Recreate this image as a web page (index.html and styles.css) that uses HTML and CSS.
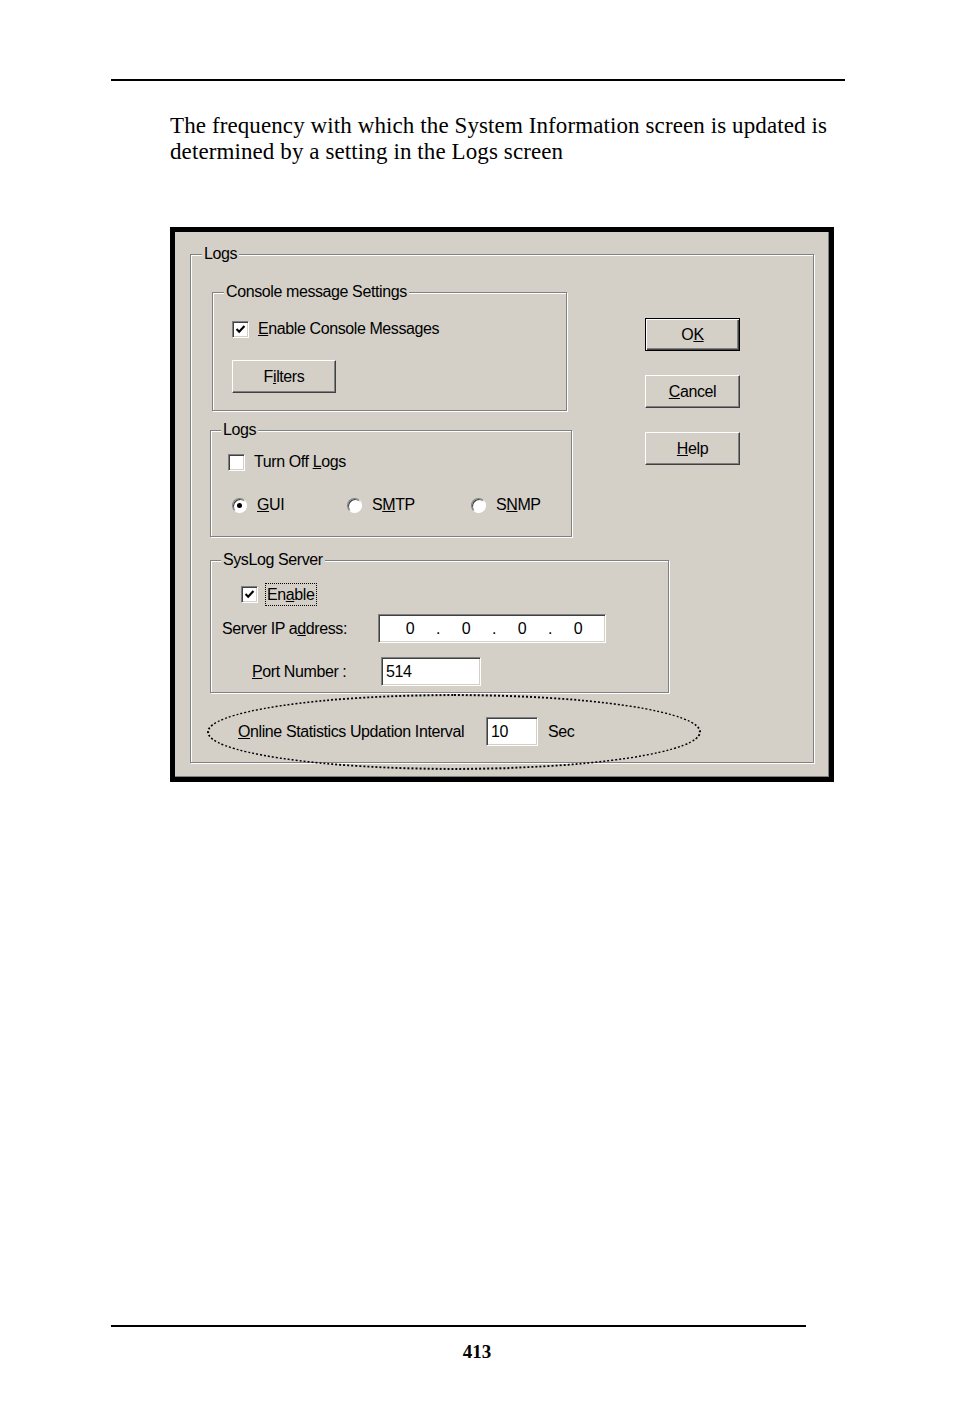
FILE: index.html
```html
<!DOCTYPE html>
<html lang="en">

<head>
    <meta charset="UTF-8">
    <meta name="viewport" content="width=device-width, initial-scale=1.0">
    <title>Logs</title>
    <link rel="stylesheet" href="styles.css">
</head>

<body>
    <div class="page">
        <hr class="rule rule-top">
        <p class="intro">The frequency with which the System Information screen is updated is<br>determined by a setting in the Logs screen</p>

        <div class="dialog">
            <div class="group group-main">
                <div class="group-title">Logs</div>
                <div class="main-top">
                    <div class="left-col">
                        <div class="group group-console">
                            <div class="group-title">Console message Settings</div>
                            <div class="check-row row-console">
                                <span class="check checked"><svg viewBox="0 0 17 17"><path d="M4 8 L7 11 L13 4.5" /></svg></span>
                                <span class="label"><u>E</u>nable Console Messages</span>
                            </div>
                            <button class="btn btn-filters">F<u>i</u>lters</button>
                        </div>

                        <div class="group group-logs">
                            <div class="group-title">Logs</div>
                            <div class="check-row row-turnoff">
                                <span class="check"></span>
                                <span class="label">Turn Off <u>L</u>ogs</span>
                            </div>
                            <div class="radio-row">
                                <div class="radio-item"><span class="radio selected"></span><span><u>G</u>UI</span></div>
                                <div class="radio-item"><span class="radio"></span><span>S<u>M</u>TP</span></div>
                                <div class="radio-item"><span class="radio"></span><span>S<u>N</u>MP</span></div>
                            </div>
                        </div>
                    </div>

                    <div class="buttons">
                        <button class="btn btn-default">O<u>K</u></button>
                        <button class="btn"><u>C</u>ancel</button>
                        <button class="btn"><u>H</u>elp</button>
                    </div>
                </div>

                <div class="group group-syslog">
                    <div class="group-title">SysLog Server</div>
                    <div class="check-row row-enable">
                        <span class="check checked"><svg viewBox="0 0 17 17"><path d="M4 8 L7 11 L13 4.5" /></svg></span>
                        <span class="label focus">En<u>a</u>ble</span>
                    </div>
                    <div class="field-row row-ip">
                        <span class="field-label">Server IP a<u>d</u>dress:</span>
                        <div class="field field-ip">
                            <span class="octet">0</span><span class="dot">.</span>
                            <span class="octet">0</span><span class="dot">.</span>
                            <span class="octet">0</span><span class="dot">.</span>
                            <span class="octet">0</span>
                        </div>
                    </div>
                    <div class="field-row row-port">
                        <span class="field-label"><u>P</u>ort Number :</span>
                        <div class="field field-port">514</div>
                    </div>
                </div>

                <div class="field-row row-online">
                    <span class="field-label"><u>O</u>nline Statistics Updation Interval</span>
                    <div class="field field-interval">10</div>
                    <span class="unit">Sec</span>
                </div>
            </div>

            <div class="highlight"></div>
        </div>

        <div class="footer">
            <hr class="rule rule-bottom">
            <div class="page-num">413</div>
        </div>
    </div>
</body>

</html>
```

FILE: styles.css
```css
* {
    margin: 0;
    padding: 0;
    box-sizing: border-box;
}

body {
    background: #fff;
    color: #000;
}

.page {
    padding-top: 79px;
    font-family: 'Liberation Serif', 'Times New Roman', serif;
}

.rule {
    border: none;
    height: 2px;
    background: #000;
}

.rule-top {
    margin-left: 111px;
    width: 734px;
}

.intro {
    margin: 32px 0 0 170px;
    font-size: 23px;
    letter-spacing: 0.1px;
    line-height: 26px;
    white-space: nowrap;
}

/* dialog */

.dialog {
    position: relative;
    margin: 62px 0 0 170px;
    width: 664px;
    height: 555px;
    border: 5px solid #000;
    background: #d4d0c8;
    box-shadow: inset -1px -1px 0 #808080;
    padding: 22px 0 0 15px;
    font-family: 'Liberation Sans', Arial, sans-serif;
    font-size: 16px;
    letter-spacing: -0.4px;
    line-height: 20px;
}

.group {
    border: 1px solid #808080;
    box-shadow: inset 1px 1px 0 #fff, 1px 1px 0 #fff;
}

.group-title {
    width: fit-content;
    margin-top: -11px;
    padding: 0 2px;
    line-height: 20px;
    background: #d4d0c8;
    white-space: nowrap;
}

.group-main {
    width: 624px;
    height: 509px;
    padding-left: 19px;
}

.group-main > .group-title {
    margin-left: -8px;
}

.main-top {
    display: flex;
}

.left-col {
    width: 435px;
}

.group-console {
    margin: 28px 0 0 2px;
    width: 355px;
    height: 119px;
    padding-left: 19px;
}

.group-console .group-title {
    margin-left: -8px;
}

.group-logs {
    margin-top: 19px;
    width: 362px;
    height: 107px;
    padding-left: 17px;
}

.group-logs .group-title {
    margin-left: -7px;
}

.group-syslog {
    margin-top: 23px;
    width: 459px;
    height: 133px;
}

.group-syslog .group-title {
    margin-left: 10px;
}

/* checkboxes and radios */

.check-row {
    display: flex;
    align-items: center;
    height: 20px;
}

.check {
    width: 17px;
    height: 17px;
    margin-right: 9px;
    border: 1px solid;
    border-color: #808080 #fff #fff #808080;
    box-shadow: inset 1px 1px 0 #404040, inset -1px -1px 0 #d4d0c8;
    background: #fff;
}

.check svg {
    display: block;
    width: 15px;
    height: 15px;
}

.check path {
    fill: none;
    stroke: #000;
    stroke-width: 2.4;
}

.row-console {
    margin-top: 17px;
}

.row-turnoff {
    margin-top: 12px;
}

.row-enable {
    margin: 12px 0 0 30px;
    height: 24px;
}

.row-enable .check {
    margin-right: 7px;
}

.focus {
    border: 1px dotted #000;
    padding: 1px 2px 0 1px;
    line-height: 20px;
}

.radio-row {
    display: grid;
    grid-template-columns: 115px 124px auto;
    margin: 23px 0 0 4px;
}

.radio-item {
    display: flex;
    align-items: center;
    height: 20px;
}

.radio {
    position: relative;
    width: 15px;
    height: 15px;
    margin-right: 10px;
    border-radius: 50%;
    border: 1px solid;
    border-color: #808080 #fff #fff #808080;
    box-shadow: inset 1px 1px 0 #404040;
    background: #fff;
}

.radio.selected::after {
    content: "";
    position: absolute;
    left: 4px;
    top: 4px;
    width: 5px;
    height: 5px;
    border-radius: 50%;
    background: #000;
}

/* buttons */

.buttons {
    display: flex;
    flex-direction: column;
    gap: 24px;
    padding-top: 54px;
}

.btn {
    width: 95px;
    height: 33px;
    font: inherit;
    letter-spacing: inherit;
    color: #000;
    background: #d4d0c8;
    border: 1px solid;
    border-color: #fff #404040 #404040 #fff;
    box-shadow: inset -1px -1px 0 #808080;
}

.btn-default {
    border-color: #000;
    box-shadow: inset 1px 1px 0 #fff, inset -1px -1px 0 #404040, inset -2px -2px 0 #808080;
}

.btn-filters {
    width: 104px;
    margin-top: 21px;
}

/* text fields */

.field-row {
    display: flex;
    align-items: center;
}

.field {
    height: 29px;
    border: 1px solid;
    border-color: #808080 #fff #fff #808080;
    box-shadow: inset 1px 1px 0 #404040, inset -1px -1px 0 #d4d0c8;
    background: #fff;
    padding: 3px 0 0 4px;
    line-height: 21px;
}

.row-ip {
    margin: 8px 0 0 11px;
}

.row-ip .field-label {
    width: 156px;
}

.field-ip {
    display: flex;
    width: 228px;
    padding-left: 17px;
}

.octet,
.dot {
    width: 28px;
    text-align: center;
}

.row-port {
    margin: 14px 0 0 41px;
}

.row-port .field-label {
    width: 129px;
}

.field-port {
    width: 100px;
}

.row-online {
    margin: 24px 0 0 28px;
}

.row-online .field-label {
    width: 248px;
}

.field-interval {
    width: 52px;
}

.unit {
    margin-left: 10px;
}

.highlight {
    position: absolute;
    left: 32px;
    top: 462px;
    width: 494px;
    height: 76px;
    border: 2px dotted #000;
    border-radius: 50%;
}

/* footer */

.footer {
    margin-top: 543px;
}

.rule-bottom {
    margin-left: 111px;
    width: 695px;
}

.page-num {
    margin-top: 13px;
    text-align: center;
    font-weight: bold;
    font-size: 19px;
    line-height: 24px;
}
```
